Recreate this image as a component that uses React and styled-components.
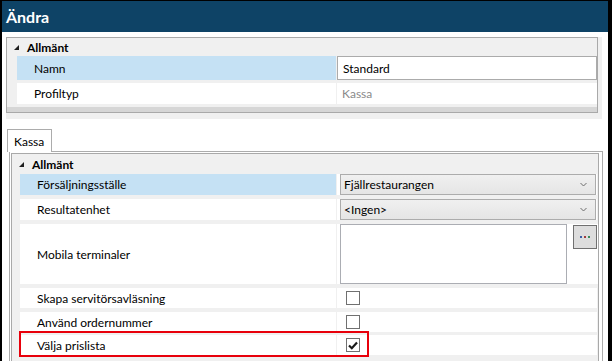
import React from "react";
import styled, { createGlobalStyle } from "styled-components";

const Global = createGlobalStyle`
  html, body { margin: 0; padding: 0; background: #fff; }
  * { box-sizing: border-box; }
`;

const FONT = `"Segoe UI", Lato, "Open Sans", sans-serif`;

const Frame = styled.div`
  width: 612px;
  height: 361px;
  border-left: 2px solid #000;
  border-right: 4px solid #000;
  border-top: 1px solid #000;
  background: #fff;
  font-family: ${FONT};
  font-size: 12px;
  color: #000;
  display: flex;
  flex-direction: column;
  overflow: hidden;
`;

const Header = styled.div`
  height: 31px;
  flex: none;
  background: #0e4366;
  color: #fff;
  font-size: 16px;
  font-weight: bold;
  display: flex;
  align-items: center;
  padding-left: 4px;
  padding-bottom: 1px;
`;

const Body = styled.div`
  flex: 1;
  display: flex;
  flex-direction: column;
  padding: 5px 4px 0 4px;
`;

const TopArea = styled.div`
  background: #f0f0f0;
  padding-right: 4px;
  padding-bottom: 6px;
  margin-right: 2px;
`;

const Grid = styled.div`
  border: 1px solid #a9a9a9;
  background: #f0f0f0;
  padding-left: ${(p) => p.$indent}px;
  padding-right: ${(p) => p.$right || 0}px;
  display: flex;
  flex-direction: column;
`;

const FillGrid = styled(Grid)`
  flex: 1;
  border-bottom: none;
`;

const Category = styled.div`
  height: ${(p) => p.$h}px;
  display: flex;
  align-items: center;
  margin-left: ${(p) => -p.$indent + 6}px;
  font-weight: bold;
  gap: 7px;
`;

const Triangle = styled.svg`
  width: 7px;
  height: 7px;
  flex: none;
`;

const Row = styled.div`
  display: grid;
  grid-template-columns: ${(p) => p.$label}px 1fr;
  column-gap: 1px;
  height: ${(p) => p.$h}px;
  margin-top: ${(p) => p.$gap || 0}px;
`;

const Label = styled.div`
  background: ${(p) => (p.$selected ? "#c5e1f4" : "#fff")};
  padding-left: 17px;
  display: flex;
  align-items: center;
`;

const Value = styled.div`
  background: #fff;
  display: flex;
  align-items: ${(p) => p.$align || "center"};
  padding: ${(p) => p.$pad || "0"};
  gap: 6px;
`;

const TextBox = styled.div`
  flex: 1;
  align-self: stretch;
  border: 1px solid #ababab;
  display: flex;
  align-items: center;
  padding-left: 5px;
`;

const ReadOnly = styled.div`
  color: #8a8a8a;
  padding-left: 5px;
`;

const GridFooter = styled.div`
  height: 8px;
  margin-left: ${(p) => -p.$indent}px;
  border-top: 3px solid #f0f0f0;
  background: #d6d6d6;
`;

const TabStrip = styled.div`
  margin-top: 10px;
  display: flex;
  padding-left: 1px;
  position: relative;
  z-index: 1;
`;

const Tab = styled.div`
  height: 23px;
  padding: 0 7px 0 6px;
  border: 1px solid #acacac;
  border-bottom: none;
  background: #fff;
  display: flex;
  align-items: center;
  margin-bottom: -1px;
`;

const TabPanel = styled.div`
  flex: 1;
  margin-left: 3px;
  margin-right: 1px;
  border: 1px solid #acacac;
  border-bottom: none;
  padding: 1px 3px 0 1px;
  display: flex;
  flex-direction: column;
`;

const Combo = styled.div`
  flex: 1;
  align-self: stretch;
  border: 1px solid #acacac;
  background: linear-gradient(#f0f0f0, #e5e5e5);
  display: flex;
  align-items: center;
  justify-content: space-between;
  padding: 0 8px 0 3px;
`;

const Chevron = styled.svg`
  width: 7px;
  height: 5px;
`;

const TextArea = styled.div`
  width: 227px;
  height: 60px;
  border: 1px solid #abadb3;
  background: #fff;
`;

const DotsButton = styled.div`
  width: 24px;
  height: 24px;
  border: 1px solid #707070;
  background: #dddddd;
  display: flex;
  align-items: center;
  justify-content: center;
  margin-top: 1px;
`;

const CheckBox = styled.div`
  width: 14px;
  height: 14px;
  border: 1px solid #707070;
  background: #fff;
  display: flex;
  align-items: center;
  justify-content: center;
`;

const Highlight = styled.div`
  position: relative;
  &::after {
    content: "";
    position: absolute;
    left: -1px;
    top: -1px;
    width: 346px;
    bottom: -2px;
    border: 2px solid #e8000b;
    pointer-events: none;
  }
`;

const Tri = () => (
  <Triangle viewBox="0 0 7 7">
    <path d="M6 1 L6 6 L1 6 Z" fill="#1e1e1e" />
  </Triangle>
);

const Chev = () => (
  <Chevron viewBox="0 0 7 5">
    <path d="M0.5 1 L3.5 4 L6.5 1" fill="none" stroke="#6d6d6d" strokeWidth="1" />
  </Chevron>
);

const Dots = () => (
  <svg width="10" height="3" viewBox="0 0 10 3">
    <rect x="0" y="0" width="2" height="2" fill="#3c5fa8" />
    <rect x="4" y="0" width="2" height="2" fill="#a03c3c" />
    <rect x="8" y="0" width="2" height="2" fill="#3c8a5a" />
  </svg>
);

const Check = () => (
  <svg width="10" height="9" viewBox="0 0 10 9">
    <path d="M1 4.5 L3.8 7.2 L9 1.5" fill="none" stroke="#1a1a1a" strokeWidth="2.2" />
  </svg>
);

export default function App() {
  return (
    <>
      <Global />
      <Frame>
        <Header>Ändra</Header>
        <Body>
          <TopArea>
            <Grid $indent={10}>
              <Category $h={18} $indent={10}>
                <Tri />
                Allmänt
              </Category>
              <Row $label={319} $h={24}>
                <Label $selected>Namn</Label>
                <Value>
                  <TextBox>Standard</TextBox>
                </Value>
              </Row>
              <Row $label={319} $h={21} $gap={3}>
                <Label>Profiltyp</Label>
                <Value>
                  <ReadOnly>Kassa</ReadOnly>
                </Value>
              </Row>
              <GridFooter $indent={10} />
            </Grid>
          </TopArea>
          <TabStrip>
            <Tab>Kassa</Tab>
          </TabStrip>
          <TabPanel>
            <FillGrid $indent={8} $right={1}>
              <Category $h={20} $indent={8}>
                <Tri />
                Allmänt
              </Category>
              <Row $label={316} $h={21}>
                <Label $selected>Försäljningsställe</Label>
                <Value $pad="0 1px 0 3px">
                  <Combo>
                    Fjällrestaurangen
                    <Chev />
                  </Combo>
                </Value>
              </Row>
              <Row $label={316} $h={21} $gap={4}>
                <Label>Resultatenhet</Label>
                <Value $pad="0 1px 0 3px">
                  <Combo>
                    &lt;Ingen&gt;
                    <Chev />
                  </Combo>
                </Value>
              </Row>
              <Row $label={316} $h={60} $gap={4}>
                <Label>Mobila terminaler</Label>
                <Value $pad="0 1px 0 3px" $align="flex-start">
                  <TextArea />
                  <DotsButton>
                    <Dots />
                  </DotsButton>
                </Value>
              </Row>
              <Row $label={316} $h={20} $gap={4}>
                <Label>Skapa servitörsavläsning</Label>
                <Value $pad="0 0 0 9px">
                  <CheckBox />
                </Value>
              </Row>
              <Row $label={316} $h={20} $gap={4}>
                <Label>Använd ordernummer</Label>
                <Value $pad="0 0 0 9px">
                  <CheckBox />
                </Value>
              </Row>
              <Highlight>
                <Row $label={316} $h={20} $gap={3}>
                  <Label>Välja prislista</Label>
                  <Value $pad="0 0 0 9px">
                    <CheckBox>
                      <Check />
                    </CheckBox>
                  </Value>
                </Row>
              </Highlight>
            </FillGrid>
          </TabPanel>
        </Body>
      </Frame>
    </>
  );
}
